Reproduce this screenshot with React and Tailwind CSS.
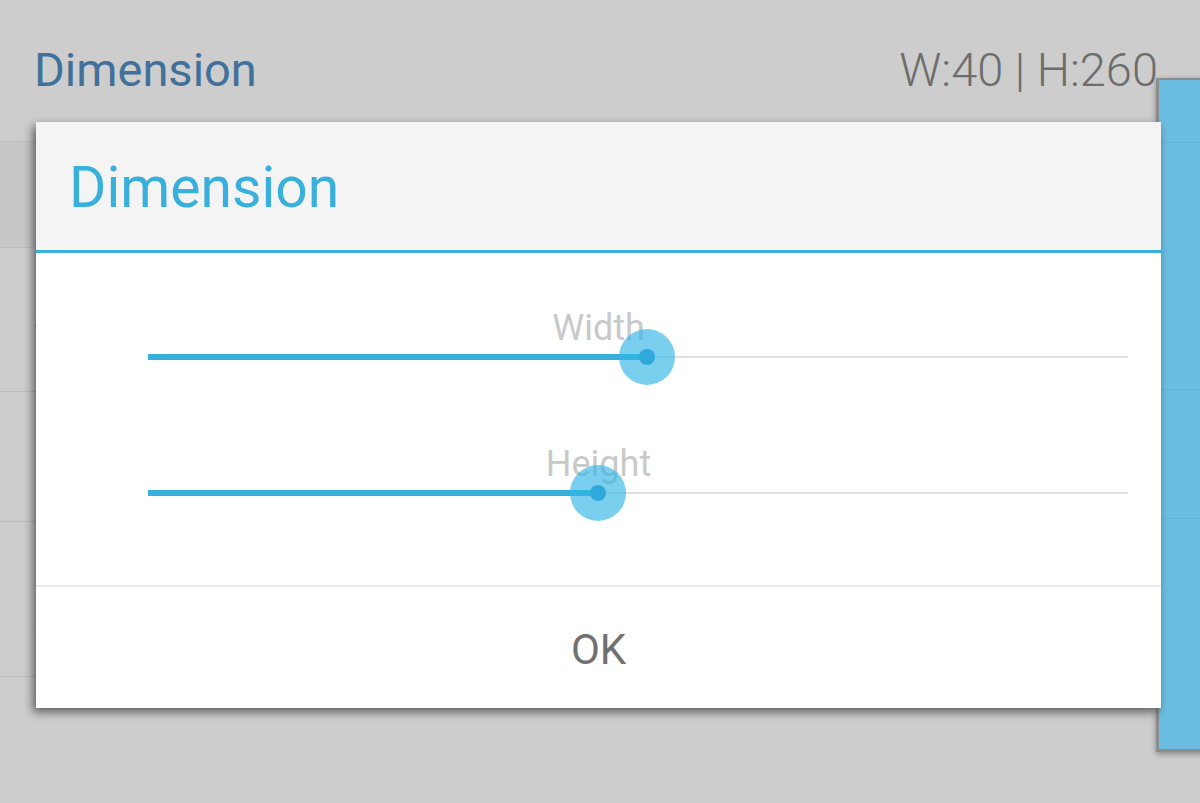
import React from "react";

const rows = [
  { h: "h-[106px]", bg: "bg-[#c7c7c7]", lines: [] },
  { h: "h-[144px]", bg: "", lines: ["Size"] },
  { h: "h-[130px]", bg: "", lines: [] },
  { h: "h-[155px]", bg: "", lines: ["1 item", "(default)"] },
];

const Slider = ({ label, value }) => {
  const pct = `${value * 100}%`;
  return (
    <div className="relative h-[56px] pl-[112px] pr-[33px]">
      <div className="absolute left-0 right-0 top-[-19px] text-center text-[36px] leading-[36px] text-[#c9c9c9]">
        {label}
      </div>
      <div className="relative h-full">
        <div className="absolute left-0 right-0 top-[27px] h-[2px] bg-[#e0e0e0]" />
        <div
          className="absolute left-0 top-[25px] h-[6px] bg-[#36afdd]"
          style={{ width: pct }}
        />
        <div
          className="absolute top-0 -ml-[28px] flex h-[56px] w-[56px] items-center justify-center rounded-full bg-[#33b5e5]/65"
          style={{ left: pct }}
        >
          <div className="h-[16px] w-[16px] rounded-full bg-[#2fa9dc]" />
        </div>
      </div>
    </div>
  );
};

const App = () => {
  return (
    <div
      className="relative h-[803px] w-[1200px] overflow-hidden bg-[#cdcdcd]"
      style={{ fontFamily: "Roboto, 'Noto Sans', sans-serif" }}
    >
      <div className="flex h-[142px] items-center justify-between border-b border-[#bdbdbd] pl-[34px] pr-[42px]">
        <span className="text-[47px] text-[#41709a]">Dimension</span>
        <span className="text-[47px] font-light text-[#6d6d6d]">W:40 | H:260</span>
      </div>

      {rows.map((r, i) => (
        <div
          key={i}
          className={`flex flex-col justify-center gap-[20px] border-b border-[#bdbdbd] pl-[34px] text-[36px] leading-[36px] text-[#555] ${r.h} ${r.bg}`}
        >
          {r.lines.map((t) => (
            <span key={t}>{t}</span>
          ))}
        </div>
      ))}

      {/* blue panel on the right edge */}
      <div className="absolute left-[1156px] top-[78px] h-[674px] w-[60px] border-l-[3px] border-t-[2px] border-b-[3px] border-[#8c8c8c] bg-[#6bbde2] shadow-[0_2px_6px_rgba(0,0,0,0.35)]">
        <div className="mt-[62px] h-px bg-[#63b3d8]" />
        <div className="mt-[246px] h-px bg-[#63b3d8]" />
        <div className="mt-[128px] h-px bg-[#63b3d8]" />
      </div>

      {/* dialog */}
      <div className="absolute left-[36px] top-[122px] flex w-[1125px] flex-col bg-white shadow-[-3px_4px_9px_rgba(0,0,0,0.55)]">
        <div className="flex h-[128px] items-center bg-[#f4f4f4] pl-[33px] pt-[3px]">
          <span className="text-[57px] text-[#39afdc]">Dimension</span>
        </div>
        <div className="h-[3px] bg-[#3bb0da]" />
        <div className="flex flex-col gap-[80px] pt-[76px] pb-[64px]">
          <Slider label="Width" value={0.509} />
          <Slider label="Height" value={0.459} />
        </div>
        <div className="h-[2px] bg-[#e8e8e8]" />
        <div className="flex h-[121px] items-center justify-center pt-[3px] text-[42px] text-[#717171]">
          OK
        </div>
      </div>
    </div>
  );
};

export default App;
